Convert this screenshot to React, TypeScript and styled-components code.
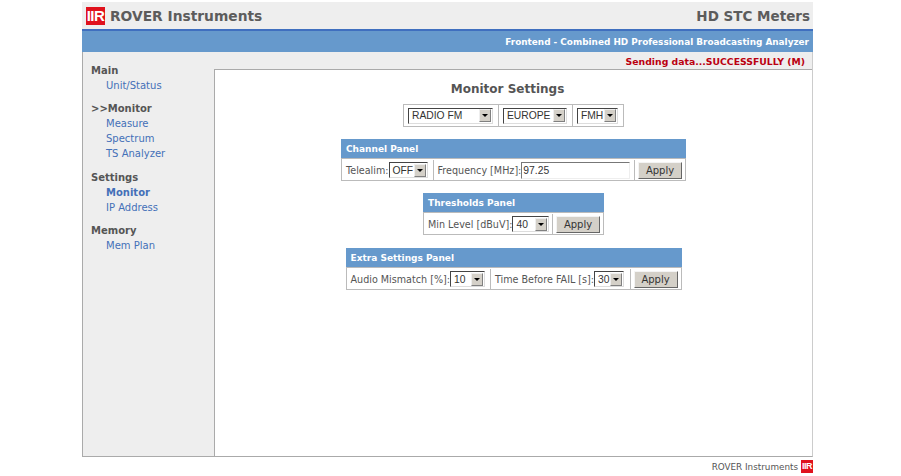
import { createGlobalStyle } from "styled-components";
import styled from "styled-components";

const GlobalStyle = createGlobalStyle`
  html, body {
    margin: 0;
    padding: 0;
    background: #fff;
    font-family: "DejaVu Sans", Verdana, sans-serif;
    font-size: 10px;
    color: #555;
  }
`;

const Page = styled.div`
  width: 731px;
  height: 476px;
  margin-left: 82px;
  padding-top: 2px;
  box-sizing: border-box;
  display: flex;
  flex-direction: column;
`;

const TopBar = styled.header`
  height: 27px;
  background: #eee;
  display: flex;
  align-items: center;
  justify-content: space-between;
  padding: 0 3px 0 4px;
  flex-shrink: 0;
`;

const Brand = styled.div`
  display: flex;
  align-items: center;
  gap: 5px;
`;

const BrandName = styled.span`
  font-size: 13.8px;
  font-weight: bold;
  color: #5c5c5c;
`;

const ProductName = styled.span`
  font-size: 13.5px;
  font-weight: bold;
  color: #5c5c5c;
`;

const Logo = styled.span<{ $small?: boolean }>`
  width: ${(p) => (p.$small ? 12 : 19)}px;
  height: ${(p) => (p.$small ? 13 : 18)}px;
  background: #e0121d;
  color: #fff;
  display: flex;
  align-items: center;
  justify-content: center;
  font-family: "Liberation Sans", Arial, sans-serif;
  font-weight: bold;
  font-size: ${(p) => (p.$small ? 9 : 15)}px;
  letter-spacing: -0.5px;
  line-height: 1;
`;

const BlueBar = styled.div`
  height: 21px;
  background: #6699cc;
  border-top: 2px solid #3f6fbf;
  display: flex;
  align-items: center;
  justify-content: flex-end;
  padding-right: 4px;
  flex-shrink: 0;
`;

const Subtitle = styled.span`
  color: #fff;
  font-size: 8.9px;
  font-weight: bold;
`;

const Body = styled.div`
  flex: 1;
  display: flex;
  min-height: 0;
  background: #eee;
  border-left: 1px solid #aaa;
  border-right: 1px solid #ccc;
  border-bottom: 1px solid #aaa;
`;

const Sidebar = styled.nav`
  width: 131px;
  flex-shrink: 0;
  padding-top: 11px;
  box-sizing: border-box;
`;

const MenuGroup = styled.div`
  margin-bottom: 8px;
  padding-left: 8px;
`;

const MenuTitle = styled.div`
  font-size: 10px;
  font-weight: bold;
  line-height: 15px;
  color: #555;
`;

const MenuLink = styled.a<{ $active?: boolean }>`
  display: block;
  font-size: 10px;
  line-height: 15.15px;
  padding-left: 15px;
  color: #4470b8;
  font-weight: ${(p) => (p.$active ? "bold" : "normal")};
`;

const Main = styled.div`
  flex: 1;
  min-width: 0;
  display: flex;
  flex-direction: column;
`;

const Status = styled.div`
  height: 17px;
  display: flex;
  align-items: center;
  justify-content: flex-end;
  padding: 1px 7px 0 0;
  box-sizing: border-box;
  font-size: 9.3px;
  font-weight: bold;
  color: #bb0010;
  flex-shrink: 0;
`;

const Content = styled.main`
  flex: 1;
  background: #fff;
  border-top: 1px solid #aaa;
  border-left: 1px solid #aaa;
  display: flex;
  flex-direction: column;
  align-items: center;
`;

const Heading = styled.h1`
  margin: 11px 0 7px;
  padding-right: 12px;
  font-size: 12px;
  line-height: 16px;
  font-weight: bold;
  color: #555;
`;

const Row = styled.div`
  display: flex;
  border: 1px solid #bbb;
  height: 23px;
  box-sizing: border-box;
  align-items: stretch;
`;

const PanelRow = styled(Row)`
  padding-top: 1px;
`;

const Cell = styled.div<{ $last?: boolean; $grow?: boolean }>`
  display: flex;
  align-items: center;
  padding: 0 5px 0 4px;
  white-space: nowrap;
  font-size: 9.6px;
  color: #555;
  flex: ${(p) => (p.$grow ? 1 : "none")};
  min-width: 0;
  border-right: ${(p) => (p.$last ? "none" : "1px solid #bbb")};
`;

const ButtonCell = styled.div`
  display: flex;
  align-items: center;
  padding: 0 3px;
  flex: none;
`;

const Panel = styled.section<{ $width: number; $top: number }>`
  width: ${(p) => p.$width}px;
  margin-top: ${(p) => p.$top}px;
  display: flex;
  flex-direction: column;
`;

const PanelTitle = styled.div`
  height: 19px;
  box-sizing: border-box;
  padding: 1px 0 0 5px;
  background: #6699cc;
  color: #fff;
  font-size: 9px;
  font-weight: bold;
  display: flex;
  align-items: center;
`;

const SelectBox = styled.span<{ $width: number }>`
  width: ${(p) => p.$width}px;
  height: 16px;
  flex: none;
  box-sizing: border-box;
  border-top: 1px solid #444;
  border-left: 1px solid #444;
  border-right: 1px solid #ddd;
  border-bottom: 1px solid #ddd;
  background: #fff;
  display: inline-flex;
  align-items: center;
  justify-content: space-between;
  padding: 0 1px 0 3px;
  font-family: "Liberation Sans", Arial, sans-serif;
  font-size: 10.3px;
  color: #333;
`;

const SelectArrow = styled.span`
  width: 12px;
  height: 13px;
  background: #d4d0c8;
  border-right: 1px solid #808080;
  border-bottom: 1px solid #808080;
  border-top: 1px solid #eee;
  border-left: 1px solid #eee;
  box-sizing: border-box;
  display: flex;
  align-items: center;
  justify-content: center;
  &::after {
    content: "";
    border-left: 3px solid transparent;
    border-right: 3px solid transparent;
    border-top: 3px solid #000;
  }
`;

const TextInput = styled.input`
  flex: 1;
  min-width: 0;
  height: 17px;
  box-sizing: border-box;
  border-top: 1px solid #777;
  border-left: 1px solid #777;
  border-right: 1px solid #eee;
  border-bottom: 1px solid #eee;
  background: #fff;
  padding: 0 1px;
  margin: 0 -1px 0 0;
  outline: none;
  font-family: "Liberation Sans", Arial, sans-serif;
  font-size: 10.3px;
  color: #333;
`;

const ApplyButton = styled.button`
  width: 44px;
  height: 17px;
  box-sizing: border-box;
  margin: 0;
  padding: 0;
  background: #d4d0c8;
  border-top: 1px solid #f4f4f4;
  border-left: 1px solid #f4f4f4;
  border-right: 1px solid #666;
  border-bottom: 1px solid #666;
  font-family: "DejaVu Sans", Verdana, sans-serif;
  font-size: 10px;
  color: #333;
`;

const Footer = styled.footer`
  height: 19px;
  display: flex;
  align-items: center;
  justify-content: flex-end;
  gap: 3px;
  font-size: 8.8px;
  color: #555;
  flex-shrink: 0;
`;

const Select = ({ value, width }: { value: string; width: number }) => (
  <SelectBox $width={width}>
    {value}
    <SelectArrow />
  </SelectBox>
);

const App = () => {
  return (
    <Page>
      <GlobalStyle />
      <TopBar>
        <Brand>
          <Logo>IIR</Logo>
          <BrandName>ROVER Instruments</BrandName>
        </Brand>
        <ProductName>HD STC Meters</ProductName>
      </TopBar>
      <BlueBar>
        <Subtitle>Frontend - Combined HD Professional Broadcasting Analyzer</Subtitle>
      </BlueBar>
      <Body>
        <Sidebar>
          <MenuGroup>
            <MenuTitle>Main</MenuTitle>
            <MenuLink>Unit/Status</MenuLink>
          </MenuGroup>
          <MenuGroup>
            <MenuTitle>&gt;&gt;Monitor</MenuTitle>
            <MenuLink>Measure</MenuLink>
            <MenuLink>Spectrum</MenuLink>
            <MenuLink>TS Analyzer</MenuLink>
          </MenuGroup>
          <MenuGroup>
            <MenuTitle>Settings</MenuTitle>
            <MenuLink $active>Monitor</MenuLink>
            <MenuLink>IP Address</MenuLink>
          </MenuGroup>
          <MenuGroup>
            <MenuTitle>Memory</MenuTitle>
            <MenuLink>Mem Plan</MenuLink>
          </MenuGroup>
        </Sidebar>
        <Main>
          <Status>Sending data...SUCCESSFULLY (M)</Status>
          <Content>
            <Heading>Monitor Settings</Heading>
            <Row>
              <Cell><Select value="RADIO FM" width={85} /></Cell>
              <Cell><Select value="EUROPE" width={64} /></Cell>
              <Cell $last><Select value="FMH" width={41} /></Cell>
            </Row>
            <Panel $width={345} $top={12}>
              <PanelTitle>Channel Panel</PanelTitle>
              <PanelRow>
                <Cell>Telealim:<Select value="OFF" width={39} /></Cell>
                <Cell $grow>Frequency [MHz]:<TextInput defaultValue="97.25" /></Cell>
                <ButtonCell><ApplyButton>Apply</ApplyButton></ButtonCell>
              </PanelRow>
            </Panel>
            <Panel $width={181} $top={12}>
              <PanelTitle>Thresholds Panel</PanelTitle>
              <PanelRow>
                <Cell $grow>Min Level [dBuV]:<Select value="40" width={37} /></Cell>
                <ButtonCell><ApplyButton>Apply</ApplyButton></ButtonCell>
              </PanelRow>
            </Panel>
            <Panel $width={336} $top={13}>
              <PanelTitle>Extra Settings Panel</PanelTitle>
              <PanelRow>
                <Cell>Audio Mismatch [%]:<Select value="10" width={35} /></Cell>
                <Cell $grow>Time Before FAIL [s]:<Select value="30" width={30} /></Cell>
                <ButtonCell><ApplyButton>Apply</ApplyButton></ButtonCell>
              </PanelRow>
            </Panel>
          </Content>
        </Main>
      </Body>
      <Footer>
        ROVER Instruments
        <Logo $small>IIR</Logo>
      </Footer>
    </Page>
  );
};

export default App;
